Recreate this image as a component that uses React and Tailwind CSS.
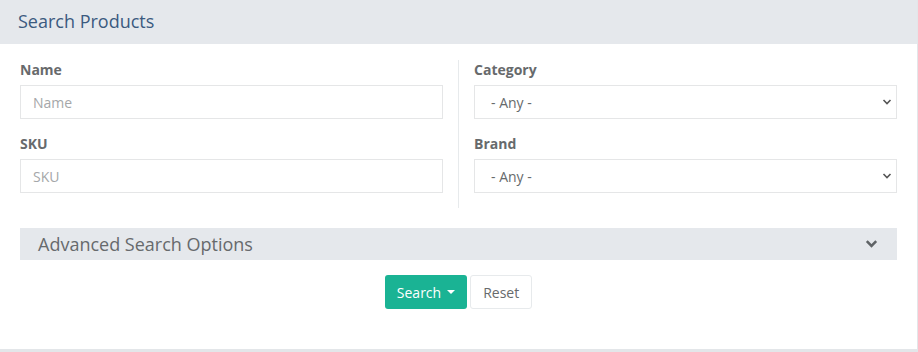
const font = { fontFamily: '"Open Sans", "Noto Sans", sans-serif' };

function Field({ label, children }) {
  return (
    <div className="pb-[15px]">
      <label className="block text-[14px] leading-[20px] font-bold text-[#676a6c] mb-[5px]">{label}</label>
      {children}
    </div>
  );
}

function TextInput({ placeholder }) {
  return (
    <input
      type="text"
      placeholder={placeholder}
      className="block w-full h-[34px] px-3 border border-[#e5e6e7] bg-white text-[14px] text-[#676a6c] placeholder:text-[#a5a7a9] outline-none"
    />
  );
}

function SelectBox() {
  return (
    <div className="relative">
      <select className="block w-full h-[34px] pl-4 pr-8 border border-[#e5e6e7] bg-white text-[14px] text-[#676a6c] appearance-none outline-none">
        <option>- Any -</option>
      </select>
      <svg className="absolute right-[5px] top-[13px] w-[10px] h-[8px] pointer-events-none" viewBox="0 0 10 8">
        <path d="M1.5 2 L5 5.5 L8.5 2" fill="none" stroke="#555" strokeWidth="1.6" />
      </svg>
    </div>
  );
}

export default function App() {
  return (
    <div className="w-[918px] h-[352px] bg-white" style={font}>
      <div className="w-[918px] border-r border-b-[3px] border-[#e3e6e9] bg-white">
        <div className="h-[44px] bg-[#e5e8ec] flex items-center pl-[18px] pb-px">
          <h2 className="text-[18px] text-[#3b5a7f] font-normal">Search Products</h2>
        </div>
        <div className="px-5 pt-4 pb-[40px]">
          <div className="flex">
            <div className="w-[423px]">
              <Field label="Name">
                <TextInput placeholder="Name" />
              </Field>
              <Field label="SKU">
                <TextInput placeholder="SKU" />
              </Field>
            </div>
            <div className="w-[15px]" />
            <div className="w-px bg-[#e7eaec]" />
            <div className="w-[15px]" />
            <div className="w-[423px]">
              <Field label="Category">
                <SelectBox />
              </Field>
              <Field label="Brand">
                <SelectBox />
              </Field>
            </div>
          </div>
          <div className="mt-5 h-8 bg-[#e5e8ec] flex items-center justify-between pl-[18px] pr-[19px]">
            <span className="text-[18px] text-[#676a6c]">Advanced Search Options</span>
            <svg className="w-[13px] h-[10px]" viewBox="0 0 13 10">
              <path d="M1.8 2.2 L6.5 6.9 L11.2 2.2" fill="none" stroke="#5f6366" strokeWidth="2.6" />
            </svg>
          </div>
          <div className="mt-[15px] flex justify-center gap-[3px]">
            <button className="h-[34px] px-3 rounded-[3px] bg-[#1ab394] text-white text-[14px] flex items-center gap-[6px]">
              Search
              <span className="w-0 h-0 border-l-[4px] border-r-[4px] border-t-[4px] border-l-transparent border-r-transparent border-t-white" />
            </button>
            <button className="h-[34px] px-3 rounded-[3px] bg-white border border-[#e7eaec] text-[#676a6c] text-[14px]">
              Reset
            </button>
          </div>
        </div>
      </div>
    </div>
  );
}
